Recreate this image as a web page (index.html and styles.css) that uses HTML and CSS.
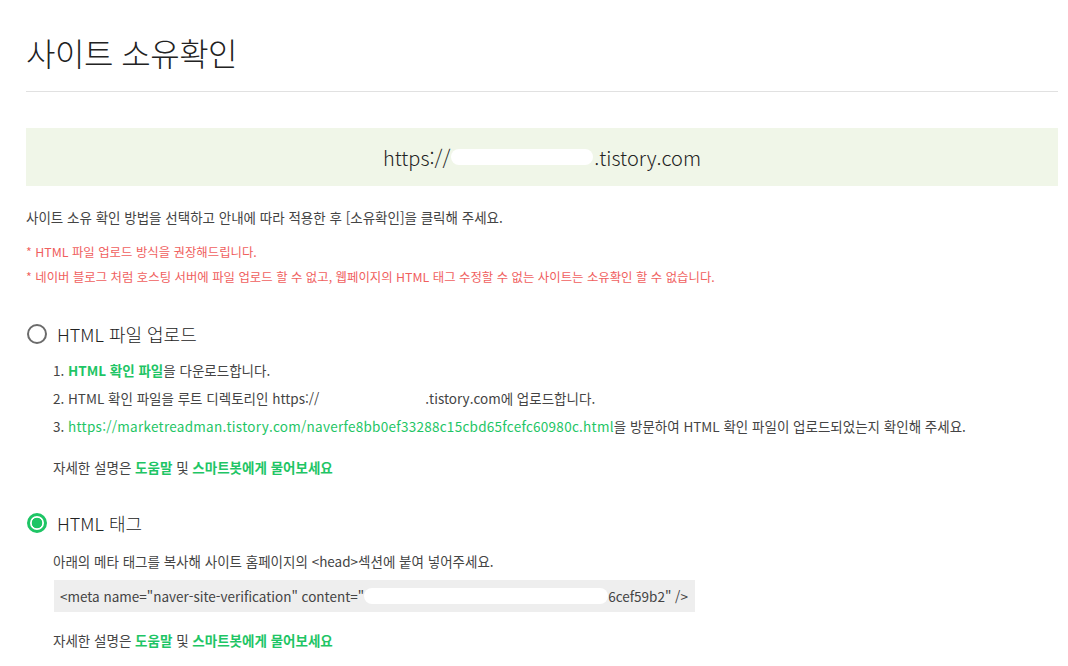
FILE: index.html
```html
<!DOCTYPE html>
<html lang="ko">
<head>
<meta charset="utf-8">
<title>사이트 소유확인</title>
<link rel="stylesheet" href="styles.css">
</head>
<body>
<div class="page">
  <h1 class="title">사이트 소유확인</h1>
  <div class="site-box">https://<span class="mask mask-url"></span>.tistory.com</div>
  <p class="intro">사이트 소유 확인 방법을 선택하고 안내에 따라 적용한 후 [소유확인]을 클릭해 주세요.</p>
  <p class="warn first">* HTML 파일 업로드 방식을 권장해드립니다.</p>
  <p class="warn">* 네이버 블로그 처럼 호스팅 서버에 파일 업로드 할 수 없고, 웹페이지의 HTML 태그 수정할 수 없는 사이트는 소유확인 할 수 없습니다.</p>

  <section class="method">
    <div class="method-head"><span class="radio"></span><span class="method-label">HTML 파일 업로드</span></div>
    <ol class="steps">
      <li>1. <a class="link strong">HTML 확인 파일</a>을 다운로드합니다.</li>
      <li>2. HTML 확인 파일을 루트 디렉토리인 https://<span class="mask mask-dir"></span>.tistory.com에 업로드합니다.</li>
      <li>3. <a class="link url">https://marketreadman.tistory.com/naverfe8bb0ef33288c15cbd65fcefc60980c.html</a>을 방문하여 HTML 확인 파일이 업로드되었는지 확인해 주세요.</li>
    </ol>
    <p class="help">자세한 설명은 <a class="link strong">도움말</a> 및 <a class="link strong">스마트봇에게 물어보세요</a></p>
  </section>

  <section class="method second">
    <div class="method-head"><span class="radio checked"></span><span class="method-label">HTML 태그</span></div>
    <p class="desc">아래의 메타 태그를 복사해 사이트 홈페이지의 &lt;head&gt;섹션에 붙여 넣어주세요.</p>
    <div class="code">&lt;meta name="naver-site-verification" content="<span class="mask mask-code"></span>6cef59b2" /&gt;</div>
    <p class="help">자세한 설명은 <a class="link strong">도움말</a> 및 <a class="link strong">스마트봇에게 물어보세요</a></p>
  </section>
</div>
</body>
</html>
```

FILE: styles.css
```css
* { box-sizing: border-box; }
html, body { margin: 0; padding: 0; background: #fff; }
body {
  font-family: "Noto Sans CJK KR", "Noto Sans", sans-serif;
  color: #444;
}
.page {
  width: 1032px;
  margin-left: 26px;
}
.title {
  margin: 0;
  padding-top: 30px;
  height: 92px;
  font-size: 32px;
  line-height: 44px;
  font-weight: 300;
  color: #222;
  letter-spacing: -0.5px;
  border-bottom: 1px solid #e1e1e1;
}
.site-box {
  margin-top: 36px;
  height: 58px;
  background: #f0f6e8;
  display: flex;
  align-items: center;
  justify-content: center;
  font-size: 20px;
  font-weight: 300;
  color: #222;
}
.mask { display: inline-block; background: #fff; vertical-align: middle; }
.mask-url { width: 142px; height: 16px; border-radius: 8px; margin: 0 1px; }
.mask-dir { width: 106px; height: 14px; }
.mask-code { width: 244px; height: 16px; border-radius: 8px; }
.intro {
  margin: 21px 0 0;
  font-size: 13.5px;
  line-height: 20px;
  color: #444;
}
.warn {
  margin: 5px 0 0;
  font-size: 12.4px;
  line-height: 20px;
  color: #f0605e;
}
.warn.first { margin-top: 15px; }
.method { margin-top: 35px; }
.method.second { margin-top: 34px; }
.method-head {
  display: flex;
  align-items: center;
  gap: 10px;
  height: 24px;
  margin-left: 1px;
}
.radio {
  width: 20px;
  height: 20px;
  border-radius: 50%;
  border: 2px solid #6b6b6b;
  flex: none;
}
.radio.checked {
  border: 3px solid #1ec565;
  background: radial-gradient(circle, #1ec565 0 5px, #fff 5.6px);
}
.method-label {
  font-size: 18px;
  color: #222;
  font-weight: 300;
}
.steps {
  list-style: none;
  margin: 14px 0 0 27px;
  padding: 0;
}
.steps li {
  font-size: 13.5px;
  line-height: 20px;
  margin-bottom: 8px;
  color: #444;
}
.link { color: #1ec565; text-decoration: none; }
.link.strong { font-weight: 600; }
.link.url { letter-spacing: 0.27px; }
.help {
  margin: 21px 0 0 27px;
  font-size: 13.5px;
  line-height: 20px;
  color: #444;
}
.desc {
  margin: 16px 0 0 27px;
  font-size: 13.5px;
  line-height: 20px;
}
.code {
  margin: 9px 0 0 28px;
  width: 641px;
  height: 32px;
  background: #eee;
  display: flex;
  align-items: center;
  padding-left: 6px;
  font-size: 13.5px;
  color: #444;
  white-space: pre;
}
.method.second .help { margin-top: 18px; }
```
